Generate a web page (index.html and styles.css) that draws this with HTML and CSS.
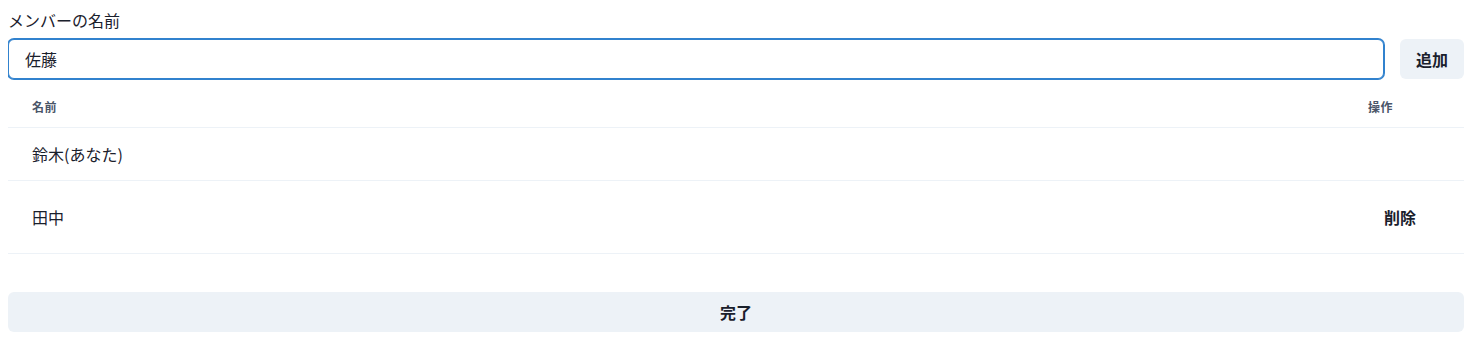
FILE: index.html
```html
<!DOCTYPE html>
<html lang="ja">
<head>
  <meta charset="UTF-8">
  <meta name="viewport" content="width=device-width, initial-scale=1.0">
  <title>メンバー</title>
  <link rel="stylesheet" href="styles.css">
</head>
<body>
  <div class="container">
    <label class="field-label" for="member-name">メンバーの名前</label>
    <div class="add-row">
      <input type="text" id="member-name" class="name-input" value="佐藤">
      <button class="add-button">追加</button>
    </div>
    <table class="member-table">
      <thead>
        <tr>
          <th>名前</th>
          <th class="col-action">操作</th>
        </tr>
      </thead>
      <tbody>
        <tr>
          <td>鈴木(あなた)</td>
          <td class="col-action"></td>
        </tr>
        <tr>
          <td>田中</td>
          <td class="col-action"><button class="delete-button">削除</button></td>
        </tr>
      </tbody>
    </table>
    <button class="done-button">完了</button>
  </div>
</body>
</html>
```

FILE: styles.css
```css
* {
  margin: 0;
  padding: 0;
  box-sizing: border-box;
}
body {
  margin: 8px;
  font-family: "Noto Sans CJK JP", "Noto Sans", sans-serif;
  color: #1a202c;
  background: #fff;
}
.field-label {
  display: block;
  font-size: 16px;
  line-height: 24px;
  margin-bottom: 7px;
}
.add-row {
  display: flex;
  gap: 16px;
}
.name-input {
  flex: 1;
  height: 40px;
  padding: 0 16px;
  font-family: inherit;
  font-size: 16px;
  color: #1a202c;
  border: 1px solid #3182ce;
  box-shadow: 0 0 0 1px #3182ce;
  border-radius: 6px;
  outline: none;
}
.add-button, .done-button {
  height: 40px;
  background: #edf2f7;
  border: none;
  border-radius: 6px;
  font-family: inherit;
  font-size: 16px;
  font-weight: 700;
  color: #1a202c;
  cursor: pointer;
}
.add-button {
  width: 64px;
}
.member-table {
  width: 100%;
  margin-top: 8px;
  border-collapse: collapse;
}
.member-table th {
  text-align: left;
  padding: 12px 24px;
  font-size: 12px;
  line-height: 16px;
  font-weight: 700;
  letter-spacing: 0.05em;
  color: #4a5568;
  border-bottom: 1px solid #edf2f7;
}
.member-table td {
  padding: 16px 24px;
  font-size: 16px;
  line-height: 20px;
  border-bottom: 1px solid #edf2f7;
  vertical-align: middle;
}
.member-table .col-action {
  width: 120px;
}
.delete-button {
  display: block;
  height: 40px;
  padding: 0 16px;
  background: transparent;
  border: none;
  border-radius: 6px;
  font-family: inherit;
  font-size: 16px;
  font-weight: 700;
  color: #1a202c;
  cursor: pointer;
}
.done-button {
  display: block;
  width: 100%;
  margin-top: 38px;
}
```
